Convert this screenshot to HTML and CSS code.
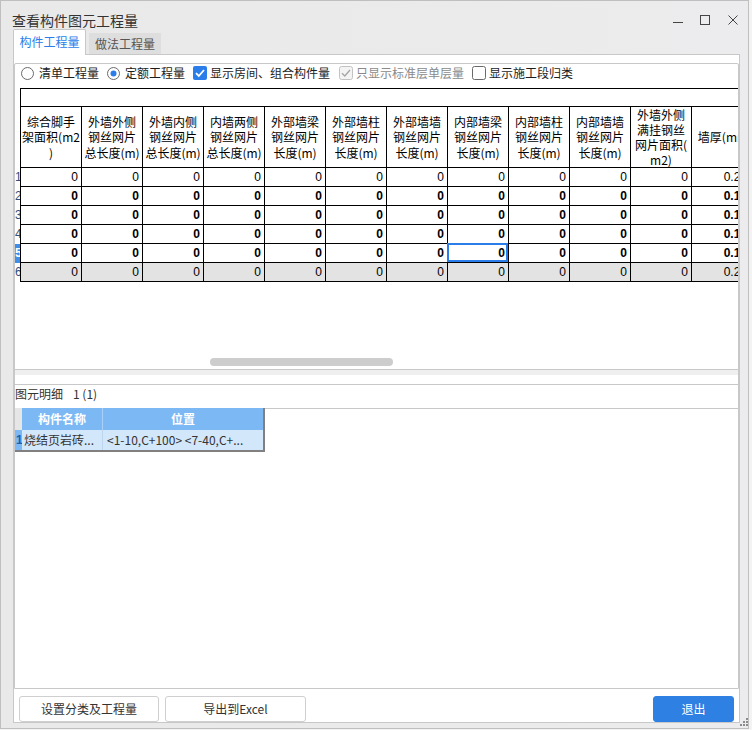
FILE: index.html
```html
<!DOCTYPE html>
<html lang="zh">
<head>
<meta charset="utf-8">
<title>查看构件图元工程量</title>
<link rel="stylesheet" href="styles.css">
</head>
<body>
<div class="window">
  <div class="titlebar">
    <div class="title">查看构件图元工程量</div>
    <svg class="ctl ctl-min" width="10" height="10" viewBox="0 0 10 10"><path d="M0 7.5H10" stroke="#444" stroke-width="1"/></svg>
    <svg class="ctl ctl-max" width="10" height="10" viewBox="0 0 10 10"><rect x="0.5" y="0.5" width="9" height="9" fill="none" stroke="#444" stroke-width="1"/></svg>
    <svg class="ctl ctl-close" width="10" height="10" viewBox="0 0 10 10"><path d="M0.5 0.5L9.5 9.5M9.5 0.5L0.5 9.5" stroke="#444" stroke-width="1"/></svg>
  </div>
  <div class="tabs">
    <div class="tab tab-active">构件工程量</div>
    <div class="tab tab-idle">做法工程量</div>
  </div>
  <div class="panel">
    <div class="inner">
      <div class="opts">
        <label class="opt">
          <svg class="radio" width="13" height="13" viewBox="0 0 13 13"><circle cx="6.5" cy="6.5" r="6" fill="#fff" stroke="#6a6a6a"/></svg>
          <span>清单工程量</span>
        </label>
        <label class="opt">
          <svg class="radio" width="13" height="13" viewBox="0 0 13 13"><circle cx="6.5" cy="6.5" r="6" fill="#fff" stroke="#6a6a6a"/><circle cx="6.5" cy="6.5" r="3" fill="#2b7de9"/></svg>
          <span>定额工程量</span>
        </label>
        <label class="opt">
          <svg class="check" width="14" height="14" viewBox="0 0 14 14"><rect x="0" y="0" width="14" height="14" rx="2" fill="#2b7de9"/><path d="M3 7.2L5.8 10L11 4" fill="none" stroke="#fff" stroke-width="1.8"/></svg>
          <span>显示房间、组合构件量</span>
        </label>
        <label class="opt opt-wide opt-disabled">
          <svg class="check" width="14" height="14" viewBox="0 0 14 14"><rect x="0.5" y="0.5" width="13" height="13" rx="2" fill="#f4f4f4" stroke="#c2c2c2"/><path d="M3 7.2L5.8 10L11 4" fill="none" stroke="#a6a6a6" stroke-width="1.4"/></svg>
          <span>只显示标准层单层量</span>
        </label>
        <label class="opt">
          <svg class="check" width="14" height="14" viewBox="0 0 14 14"><rect x="0.5" y="0.5" width="13" height="13" rx="2" fill="#fff" stroke="#6a6a6a"/></svg>
          <span>显示施工段归类</span>
        </label>
      </div>

      <div class="gridarea">
        <div class="grid">
          <div class="rh"></div>
          <div class="band"></div>

          <div class="rh"></div>
          <div class="hc">综合脚手<br>架面积(m2<br>)</div>
          <div class="hc">外墙外侧<br>钢丝网片<br>总长度(m)</div>
          <div class="hc">外墙内侧<br>钢丝网片<br>总长度(m)</div>
          <div class="hc">内墙两侧<br>钢丝网片<br>总长度(m)</div>
          <div class="hc">外部墙梁<br>钢丝网片<br>长度(m)</div>
          <div class="hc">外部墙柱<br>钢丝网片<br>长度(m)</div>
          <div class="hc">外部墙墙<br>钢丝网片<br>长度(m)</div>
          <div class="hc">内部墙梁<br>钢丝网片<br>长度(m)</div>
          <div class="hc">内部墙柱<br>钢丝网片<br>长度(m)</div>
          <div class="hc">内部墙墙<br>钢丝网片<br>长度(m)</div>
          <div class="hc hc-tight">外墙外侧<br>满挂钢丝<br>网片面积(<br>m2)</div>
          <div class="hc hc-last">墙厚(mm)</div>

          <div class="rh rn">1</div>
          <div class="dc">0</div><div class="dc">0</div><div class="dc">0</div><div class="dc">0</div><div class="dc">0</div><div class="dc">0</div><div class="dc">0</div><div class="dc">0</div><div class="dc">0</div><div class="dc">0</div><div class="dc">0</div><div class="dc dl">0.24</div>

          <div class="rh rn">2</div>
          <div class="dc b">0</div><div class="dc b">0</div><div class="dc b">0</div><div class="dc b">0</div><div class="dc b">0</div><div class="dc b">0</div><div class="dc b">0</div><div class="dc b">0</div><div class="dc b">0</div><div class="dc b">0</div><div class="dc b">0</div><div class="dc b dl">0.12</div>

          <div class="rh rn">3</div>
          <div class="dc b">0</div><div class="dc b">0</div><div class="dc b">0</div><div class="dc b">0</div><div class="dc b">0</div><div class="dc b">0</div><div class="dc b">0</div><div class="dc b">0</div><div class="dc b">0</div><div class="dc b">0</div><div class="dc b">0</div><div class="dc b dl">0.12</div>

          <div class="rh rn">4</div>
          <div class="dc b">0</div><div class="dc b">0</div><div class="dc b">0</div><div class="dc b">0</div><div class="dc b">0</div><div class="dc b">0</div><div class="dc b">0</div><div class="dc b">0</div><div class="dc b">0</div><div class="dc b">0</div><div class="dc b">0</div><div class="dc b dl">0.12</div>

          <div class="rh rn rn-sel">5</div>
          <div class="dc b">0</div><div class="dc b">0</div><div class="dc b">0</div><div class="dc b">0</div><div class="dc b">0</div><div class="dc b">0</div><div class="dc b">0</div><div class="dc b sel">0</div><div class="dc b">0</div><div class="dc b">0</div><div class="dc b">0</div><div class="dc b dl">0.12</div>

          <div class="rh rn">6</div>
          <div class="dc tot">0</div><div class="dc tot">0</div><div class="dc tot">0</div><div class="dc tot">0</div><div class="dc tot">0</div><div class="dc tot">0</div><div class="dc tot">0</div><div class="dc tot">0</div><div class="dc tot">0</div><div class="dc tot">0</div><div class="dc tot">0</div><div class="dc tot dl">0.24</div>
        </div>
        <div class="hscroll"></div>
      </div>

      <div class="splitter"></div>

      <div class="detail">
        <div class="detail-title"><span>图元明细</span><span class="detail-count">1 (1)</span></div>
        <div class="sub">
          <div class="sub-corner"></div>
          <div class="sub-h sub-h1">构件名称</div>
          <div class="sub-h">位置</div>
          <div class="sub-rn">1</div>
          <div class="sub-d sub-d1">烧结页岩砖...</div>
          <div class="sub-d sub-d2">&lt;1-10,C+100&gt; &lt;7-40,C+...</div>
        </div>
      </div>
    </div>

    <div class="buttons">
      <button class="btn btn-set">设置分类及工程量</button>
      <button class="btn btn-export">导出到Excel</button>
      <button class="btn btn-exit">退出</button>
    </div>
  </div>

  <svg class="grip" width="9" height="9" viewBox="0 0 9 9">
    <rect x="7" y="0" width="2" height="2" fill="#8c8c8c"/>
    <rect x="4" y="3" width="2" height="2" fill="#8c8c8c"/>
    <rect x="7" y="3" width="2" height="2" fill="#8c8c8c"/>
    <rect x="1" y="6" width="2" height="2" fill="#8c8c8c"/>
    <rect x="4" y="6" width="2" height="2" fill="#8c8c8c"/>
    <rect x="7" y="6" width="2" height="2" fill="#8c8c8c"/>
  </svg>
</div>
</body>
</html>
```

FILE: styles.css
```css
* { box-sizing: border-box; }

html, body {
  margin: 0;
  padding: 0;
}

body {
  background: #f3f3f3;
  font-family: "Noto Sans CJK SC", "Noto Sans", sans-serif;
  font-size: 12px;
  color: #222;
}

.window {
  position: relative;
  width: 749px;
  height: 729px;
  border: 1px solid #bfbfbf;
  background: linear-gradient(90deg, #e9e9e9 0%, #ebebeb 70%, #ececee 100%);
  display: flex;
  flex-direction: column;
}

/* title bar */
.titlebar {
  height: 28px;
  display: flex;
  align-items: flex-start;
  padding: 0 10px 0 11px;
}

.title {
  margin-top: 9px;
  line-height: 20px;
  font-size: 14px;
  color: #333;
}

.ctl {
  display: block;
  margin-top: 14px;
}

.ctl-min { margin-left: auto; }
.ctl-max { margin-left: 17px; }
.ctl-close { margin-left: 18px; }

/* tabs */
.tabs {
  height: 25px;
  display: flex;
  align-items: flex-end;
  padding-left: 12px;
}

.tab {
  text-align: center;
  font-size: 12px;
}

.tab-active {
  position: relative;
  z-index: 1;
  width: 73px;
  height: 26px;
  margin-bottom: -1px;
  background: #fff;
  border: 1px solid #c8c8c8;
  border-bottom: none;
  border-radius: 2px 2px 0 0;
  line-height: 24px;
  color: #2b7de9;
}

.tab-idle {
  width: 72px;
  height: 21px;
  margin-left: 3px;
  background: #dedede;
  line-height: 21px;
  color: #555;
}

/* panel */
.panel {
  margin-left: 12px;
  width: 727px;
  height: 669px;
  background: #fff;
  border: 1px solid #c8c8c8;
  padding-top: 8px;
  display: flex;
  flex-direction: column;
}

.inner {
  height: 626px;
  border: 1px solid #c8c8c8;
  border-radius: 2px 2px 0 0;
  display: flex;
  flex-direction: column;
}

/* options */
.opts {
  height: 24px;
  display: flex;
  align-items: flex-start;
  padding: 2px 0 0 6px;
}

.opt {
  display: flex;
  align-items: center;
  height: 14px;
  margin-left: 8px;
  line-height: 14px;
  font-size: 12px;
  color: #1c1c1c;
  white-space: nowrap;
}

.opt:first-child { margin-left: 0; }
.opt-wide { margin-left: 9px; }
.opt-disabled { color: #8a8a8a; }

.radio { display: block; margin-right: 5px; }
.check { display: block; margin-right: 3px; }

/* main grid */
.gridarea {
  height: 282px;
  border-bottom: 1px solid #c8c8c8;
  overflow: hidden;
  display: flex;
  flex-direction: column;
  flex-shrink: 0;
}

.grid {
  width: 738px;
  flex-shrink: 0;
  display: grid;
  grid-template-columns: 6px repeat(12, 61px);
  grid-template-rows: 19px 61px repeat(6, 19px);
}

.rh {
  border-right: 1px solid #000;
  overflow: hidden;
}

.band {
  grid-column: 2 / span 12;
  border-top: 1px solid #000;
  border-bottom: 1px solid #000;
}

.hc {
  border-right: 1px solid #000;
  border-bottom: 1px solid #000;
  display: flex;
  align-items: center;
  justify-content: center;
  text-align: center;
  font-size: 12px;
  line-height: 15.5px;
  color: #000;
  white-space: nowrap;
  overflow: hidden;
}

.hc-tight { line-height: 15px; }
.hc-last { justify-content: center; padding-left: 6px; }

.rn {
  font-family: "Liberation Sans", Arial, sans-serif;
  font-size: 12px;
  line-height: 18px;
  color: #30507c;
  white-space: nowrap;
}

.rn-sel {
  background: #3f8fe9;
  color: #fff;
  font-weight: bold;
}

.dc {
  border-right: 1px solid #000;
  border-bottom: 1px solid #000;
  font-family: "Liberation Sans", Arial, sans-serif;
  font-size: 12px;
  line-height: 18px;
  text-align: right;
  padding-right: 3px;
  color: #000;
  white-space: nowrap;
  overflow: hidden;
}

.dc.b { font-weight: bold; }
.dc.tot { background: #e3e3e3; }
.dc.dl { padding-right: 5px; }

.dc.sel {
  position: relative;
  z-index: 1;
  overflow: visible;
}

.dc.sel::after {
  content: "";
  position: absolute;
  left: -1px;
  top: -1px;
  right: 0;
  bottom: 0;
  border: 2px solid #2b7de9;
}

.hscroll {
  flex-shrink: 0;
  margin: 76px 0 0 195px;
  width: 183px;
  height: 8px;
  border-radius: 4px;
  background: #cdcdcd;
}

/* splitter */
.splitter {
  height: 14px;
  flex-shrink: 0;
  border-top: 5px solid #efefef;
  background: #fff;
}

/* detail */
.detail {
  flex: 1;
  border-top: 1px solid #c8c8c8;
  display: flex;
  flex-direction: column;
}

.detail-title {
  height: 24px;
  border-bottom: 1px solid #c8c8c8;
  line-height: 18px;
  font-size: 12px;
  color: #333;
  white-space: nowrap;
}

.detail-count {
  margin-left: 10px;
}

.sub {
  margin-top: -1px;
  width: 250px;
  display: grid;
  grid-template-columns: 7px 81px 160px;
  grid-template-rows: 22px 20px;
  border-right: 2px solid #808080;
  border-bottom: 2px solid #808080;
}

.sub-corner {
  background: #e6e6e6;
}

.sub-h {
  background: #7bb8f4;
  color: #fff;
  font-weight: bold;
  text-align: center;
  line-height: 22px;
  font-size: 12px;
}

.sub-h1 { border-right: 1px solid #a9d0f8; }

.sub-rn {
  background: #7bb8f4;
  color: #1d5ea8;
  font-family: "Liberation Sans", Arial, sans-serif;
  font-weight: bold;
  font-size: 12px;
  line-height: 20px;
  overflow: hidden;
  padding-left: 1px;
}

.sub-d {
  background: #d3e7fb;
  line-height: 20px;
  font-size: 12px;
  color: #333;
  white-space: nowrap;
  overflow: hidden;
}

.sub-d1 {
  padding-left: 2px;
  border-right: 1px solid #bcd6ef;
}

.sub-d2 { padding-left: 4px; }

/* buttons */
.buttons {
  display: flex;
  margin-top: 7px;
  padding: 0 5px;
}

.btn {
  height: 26px;
  margin: 0;
  padding: 0;
  border: 1px solid #cfcfcf;
  border-radius: 3px;
  background: #fff;
  font-family: "Noto Sans CJK SC", "Noto Sans", sans-serif;
  font-size: 12px;
  color: #333;
  line-height: 24px;
}

.btn-set { width: 140px; }
.btn-export { width: 141px; margin-left: 6px; }

.btn-exit {
  width: 81px;
  margin-left: auto;
  background: #2e80e2;
  border-color: #2e80e2;
  color: #fff;
}

.grip {
  position: absolute;
  right: 0;
  bottom: 1px;
  display: block;
}
```
